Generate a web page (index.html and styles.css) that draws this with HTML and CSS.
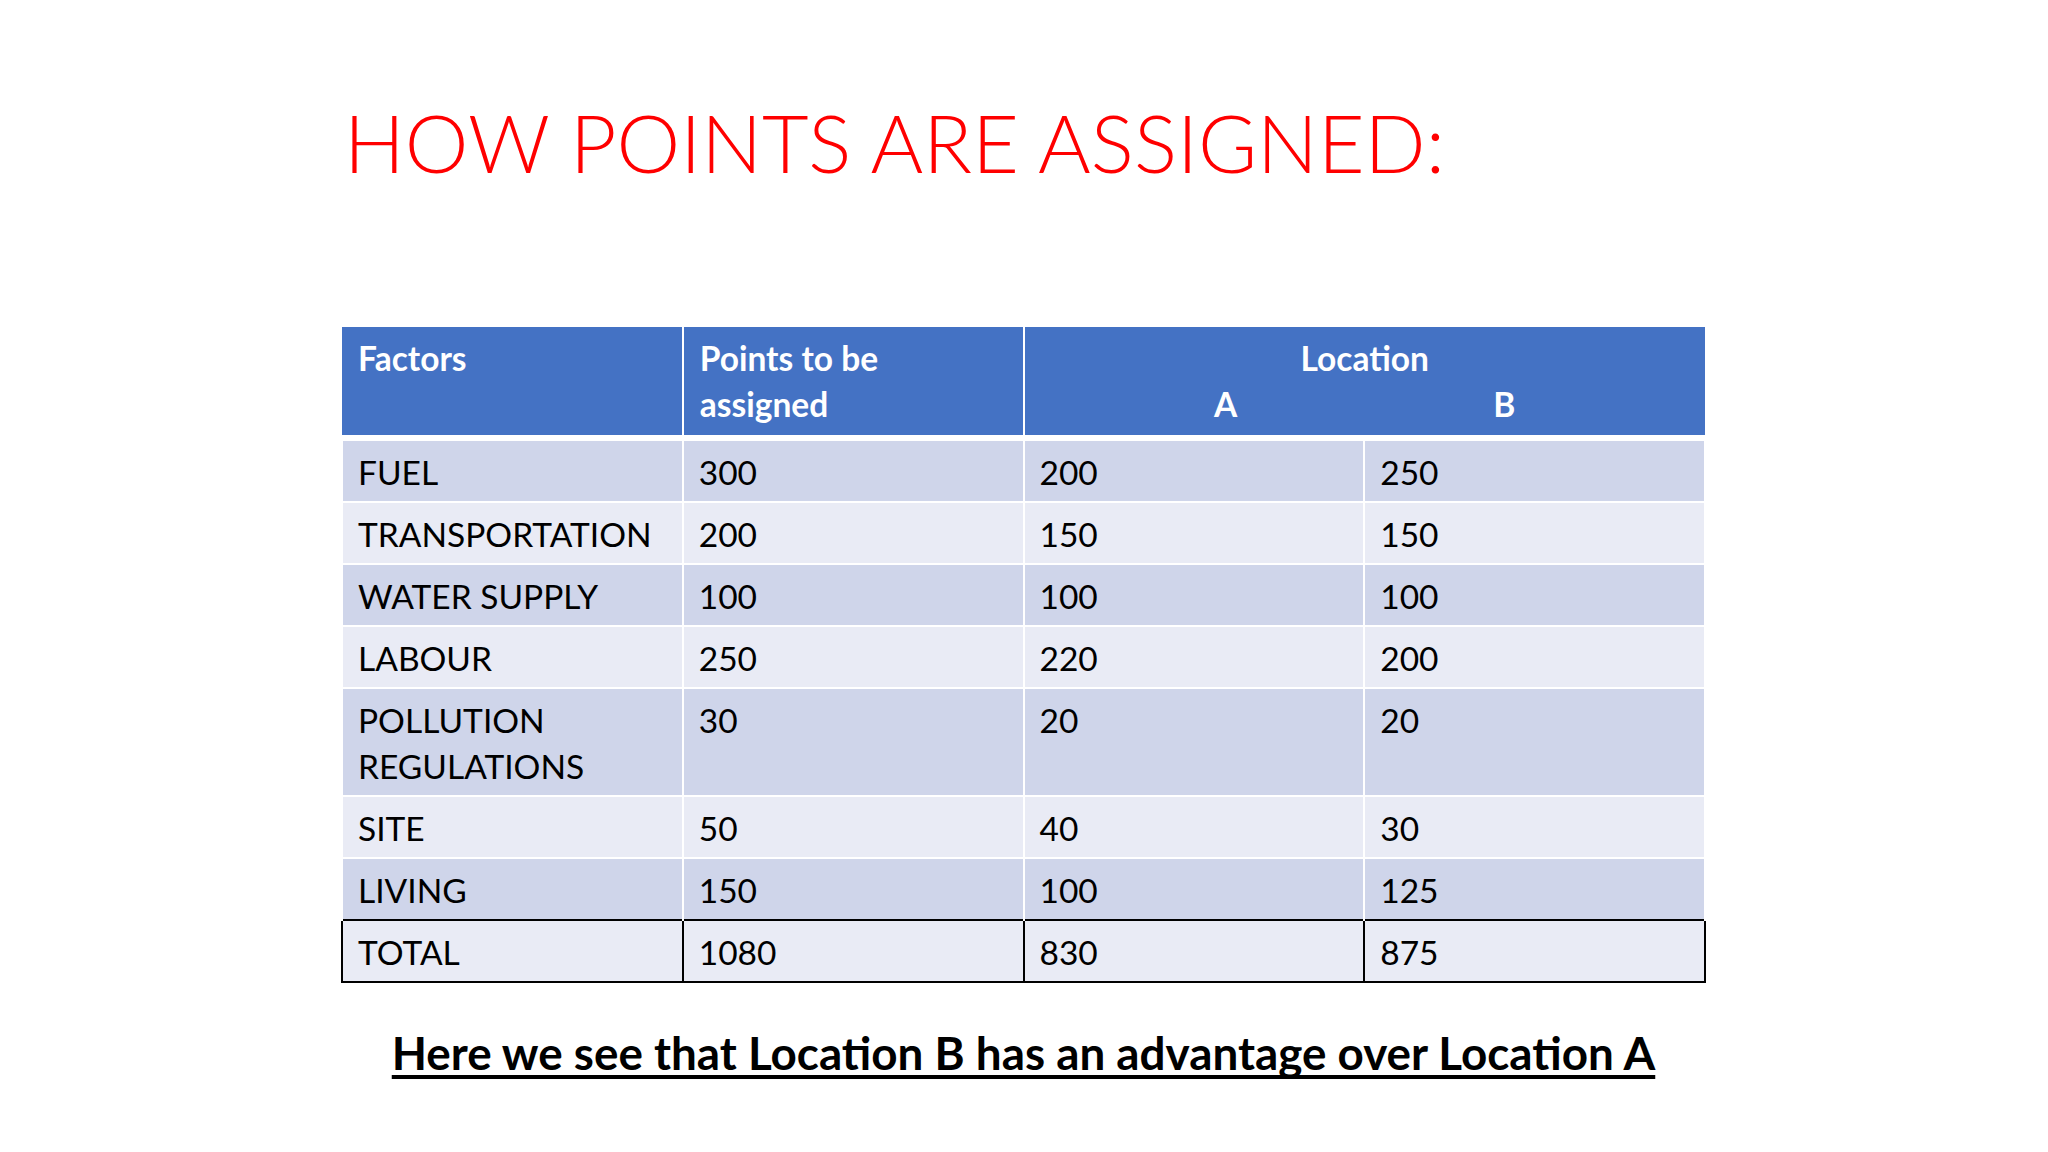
FILE: index.html
```html
<!DOCTYPE html>
<html lang="en">
<head>
<meta charset="utf-8">
<title>How points are assigned</title>
<link rel="stylesheet" href="styles.css">
</head>
<body>
<main class="slide">
  <h1 class="title">HOW POINTS ARE ASSIGNED:</h1>
  <table class="points">
    <colgroup><col><col><col><col></colgroup>
    <thead>
      <tr>
        <th>Factors</th>
        <th>Points to be<br>assigned</th>
        <th colspan="2" class="loc">
          <div class="loc-title">Location</div>
          <div class="loc-sub"><span>A</span><span>B</span></div>
        </th>
      </tr>
    </thead>
    <tbody>
      <tr class="odd"><td>FUEL</td><td>300</td><td>200</td><td>250</td></tr>
      <tr class="even"><td>TRANSPORTATION</td><td>200</td><td>150</td><td>150</td></tr>
      <tr class="odd"><td>WATER SUPPLY</td><td>100</td><td>100</td><td>100</td></tr>
      <tr class="even"><td>LABOUR</td><td>250</td><td>220</td><td>200</td></tr>
      <tr class="odd"><td>POLLUTION<br>REGULATIONS</td><td>30</td><td>20</td><td>20</td></tr>
      <tr class="even"><td>SITE</td><td>50</td><td>40</td><td>30</td></tr>
      <tr class="odd last"><td>LIVING</td><td>150</td><td>100</td><td>125</td></tr>
      <tr class="total"><td>TOTAL</td><td>1080</td><td>830</td><td>875</td></tr>
    </tbody>
  </table>
  <p class="conclusion">Here we see that Location B has an advantage over Location A</p>
</main>
</body>
</html>
```
FILE: styles.css
```css
html, body {
  margin: 0;
  padding: 0;
  background: #ffffff;
}
body {
  width: 2048px;
  height: 1152px;
  overflow: hidden;
  font-family: Lato, "Open Sans", "Liberation Sans", sans-serif;
}
.slide {
  display: flex;
  flex-direction: column;
  padding: 92px 0 0 341px;
  width: 1365px;
}
.title {
  margin: 0 0 134px 3px;
  font-weight: 300;
  font-size: 80.5px;
  line-height: 101px;
  color: #ff0000;
  white-space: nowrap;
}
.points {
  width: 1365px;
  table-layout: fixed;
  border-collapse: collapse;
  font-size: 33.5px;
  line-height: 46px;
  color: #000;
}
.points col { width: 25%; }
.points th {
  background: #4472c4;
  color: #fff;
  font-weight: 700;
  text-align: left;
  vertical-align: top;
  padding: 8px 16px;
  border-right: 2px solid #fff;
  border-bottom: 6px solid #fff;
}
.points th.loc { text-align: center; border-right: none; }
.loc-sub {
  display: flex;
  justify-content: center;
  gap: 256px;
}
.points td {
  padding: 8px 15px 6px;
  vertical-align: top;
  white-space: nowrap;
  border: 2px solid #fff;
}
.points tr.odd td { background: #cfd5ea; }
.points tr.even td { background: #e9ebf5; }
.points tr.last td { border-bottom: none; }
.points tr.total td {
  background: #e9ebf5;
  border: 2px solid #000;
}
.conclusion {
  margin: 40px 0 0;
  text-align: center;
  font-weight: 700;
  font-size: 45.8px;
  line-height: 60px;
  text-decoration: underline;
  text-decoration-thickness: 4px;
  text-underline-offset: 5px;
  text-decoration-skip-ink: none;
  color: #000;
}
```
